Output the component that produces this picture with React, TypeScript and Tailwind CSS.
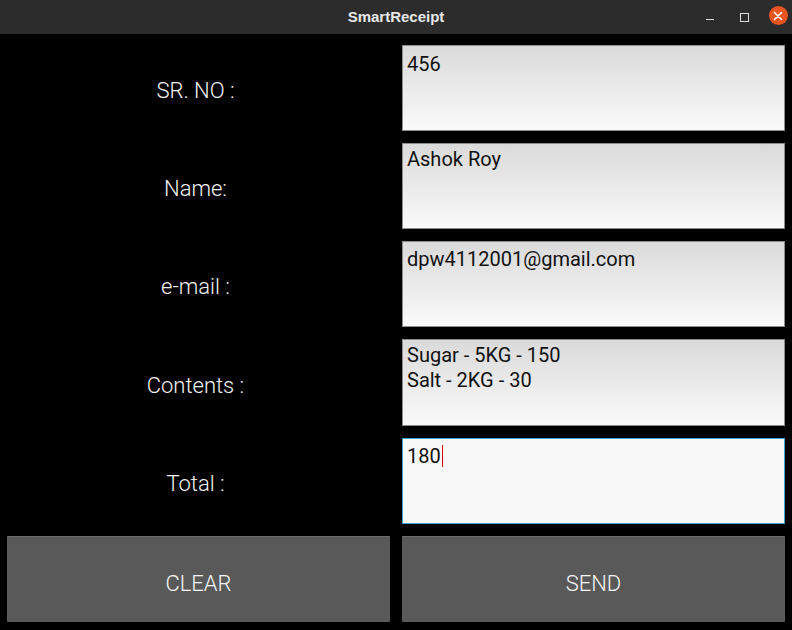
import React from "react";

const Label = ({ text }: { text: string }) => (
  <div className="flex items-center justify-center pt-[5px] pr-[6px] text-[22px] font-light text-[#f4f4f4] font-['Roboto',sans-serif]">
    {text}
  </div>
);

const Field = ({ lines, active, pad }: { lines: string[]; active?: boolean; pad: string }) => (
  <div
    className={
      (active
        ? "border border-[#3ea0cf] bg-[#f8f8f8] "
        : "border border-[#8c8c8c] bg-gradient-to-b from-[#dadada] to-[#fafafa] ") +
      "px-[4px] text-[20px] leading-[25px] text-[#111] font-['Roboto',sans-serif] " +
      pad
    }
  >
    {lines.map((l, i) => (
      <div key={i} className="flex items-center">
        <span>{l}</span>
        {active && i === lines.length - 1 ? (
          <span className="ml-[1px] inline-block h-[22px] w-[1px] bg-[#e00000]" />
        ) : null}
      </div>
    ))}
  </div>
);

const Btn = ({ text }: { text: string }) => (
  <div className="flex items-center justify-center border-t border-[#6e6e6e] bg-[#595959] rounded-[1px] pt-[9px] text-[22px] font-light text-[#f6f6f6] font-['Roboto',sans-serif]">
    {text}
  </div>
);

export default function App() {
  return (
    <div className="w-[792px] h-[630px] bg-black flex flex-col overflow-hidden">
      <div className="relative h-[34px] shrink-0 bg-[#2c2c2c] flex items-center justify-center">
        <span className="text-[15px] font-bold text-[#e8e8e8] font-['Liberation_Sans',sans-serif]">
          SmartReceipt
        </span>
        <div className="absolute right-[-3px] top-0 h-[34px] flex items-center">
          <div className="w-[34px] h-[34px] flex items-center justify-center">
            <div className="mt-[5px] w-[8px] h-[1.5px] bg-[#dedede]" />
          </div>
          <div className="w-[34px] h-[34px] flex items-center justify-center">
            <div className="w-[9px] h-[9px] border-[1.5px] border-[#dedede]" />
          </div>
          <div className="w-[34px] h-[34px] flex items-center justify-center">
            <div className="-mt-[3px] w-[19px] h-[19px] rounded-full bg-[#e95420] flex items-center justify-center">
              <svg width="10" height="10" viewBox="0 0 10 10">
                <path d="M1.5 1.5 L8.5 8.5 M8.5 1.5 L1.5 8.5" stroke="#ffffff" strokeWidth="1.6" strokeLinecap="round" />
              </svg>
            </div>
          </div>
        </div>
      </div>
      <div className="flex-1 grid grid-cols-2 grid-rows-6 gap-x-[12px] gap-y-[12px] pt-[11px] px-[7px] pb-[8px]">
        <Label text="SR. NO :" />
        <Field lines={["456"]} pad="pt-[6px]" />
        <Label text="Name:" />
        <Field lines={["Ashok Roy"]} pad="pt-[3px]" />
        <Label text="e-mail :" />
        <Field lines={["dpw4112001@gmail.com"]} pad="pt-[5px]" />
        <Label text="Contents :" />
        <Field lines={["Sugar - 5KG - 150", "Salt - 2KG - 30"]} pad="pt-[3px]" />
        <Label text="Total :" />
        <Field lines={["180"]} active pad="pt-[5px]" />
        <Btn text="CLEAR" />
        <Btn text="SEND" />
      </div>
    </div>
  );
}
